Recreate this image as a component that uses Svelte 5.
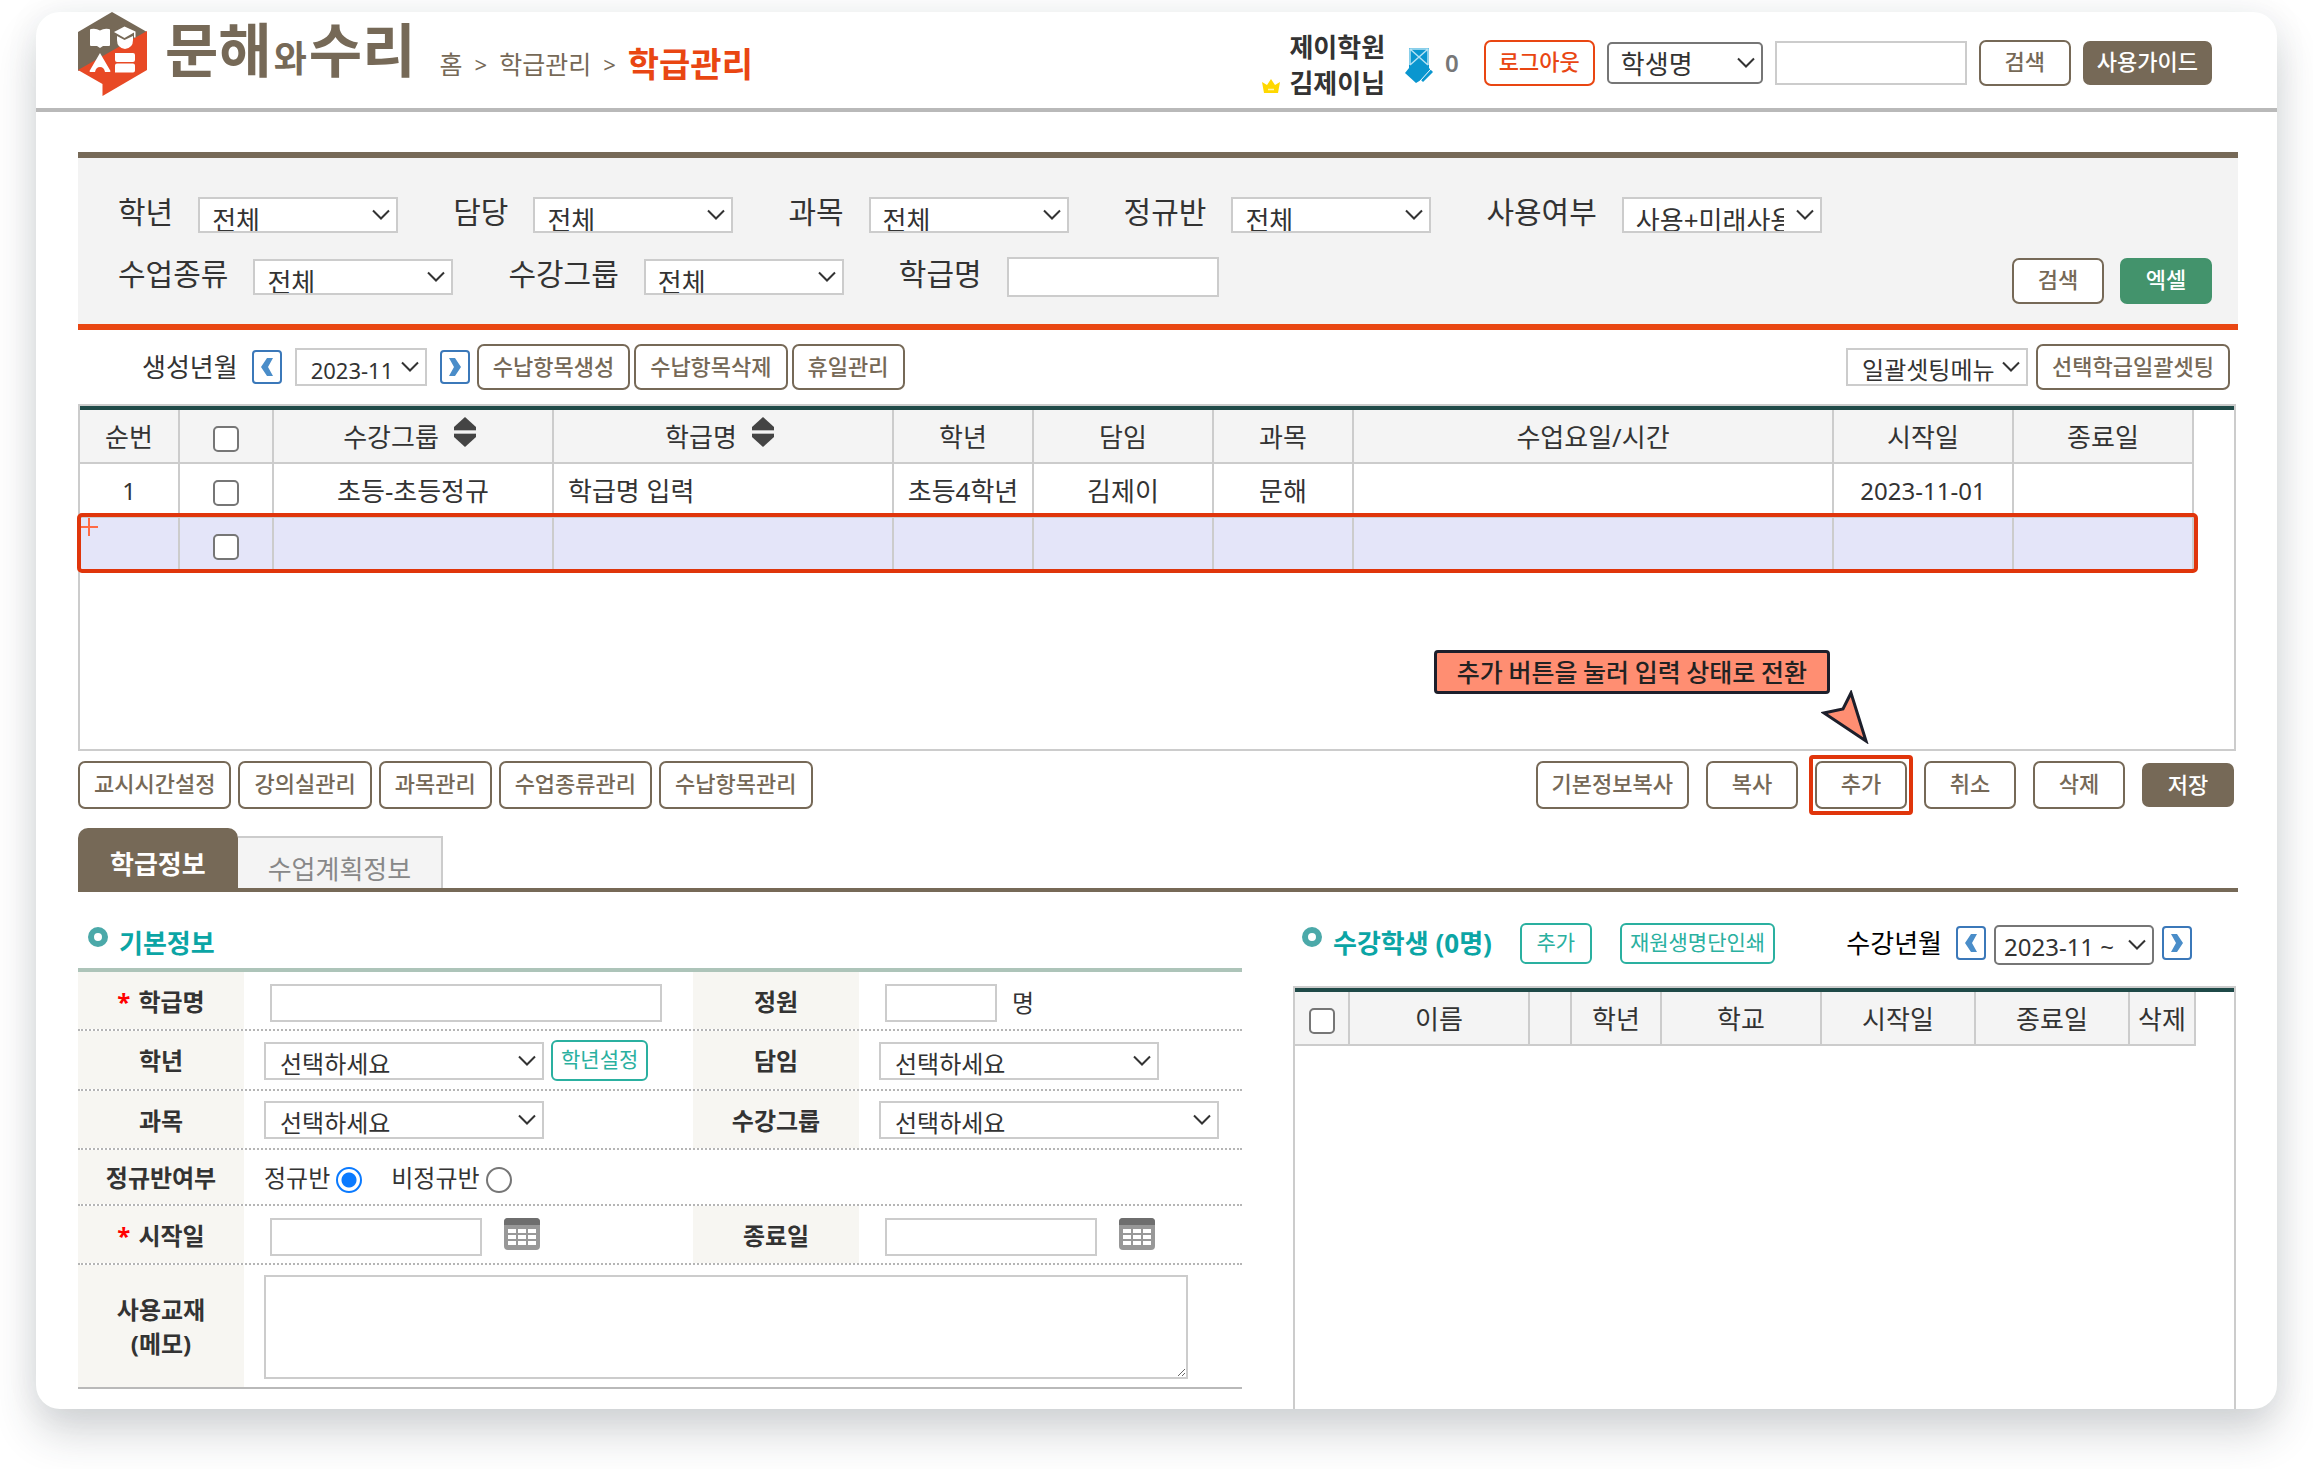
<script>
  let regular = $state('regular');

  const filterRows = [
    [
      { id: 'f-grade', label: '학년', value: '전체' },
      { id: 'f-teacher', label: '담당', value: '전체' },
      { id: 'f-subject', label: '과목', value: '전체' },
      { id: 'f-regular', label: '정규반', value: '전체' },
      { id: 'f-use', label: '사용여부', value: '사용+미래사용' }
    ],
    [
      { id: 'f-type', label: '수업종류', value: '전체' },
      { id: 'f-group', label: '수강그룹', value: '전체' }
    ]
  ];
  const settings = ['교시시간설정', '강의실관리', '과목관리', '수업종류관리', '수납항목관리'];
</script>

{#snippet picker(id, value, kind, label)}
  <span class="picker {kind}">
    <select {id} aria-label={label}><option>{value}</option></select>
    <svg viewBox="0 0 18 12" aria-hidden="true"><path d="M1 1.500 9 9.500l8-8" /></svg>
  </span>
{/snippet}

{#snippet arrow(dir, label)}
  <button class="arrow" aria-label={label}>
    <svg viewBox="0 0 26 30" aria-hidden="true">
      {#if dir === 'prev'}
        <path d="M13 6h6l-5 9 5 9h-6l-6-9z" />
      {:else}
        <path d="M13 6H7l5 9-5 9h6l6-9z" />
      {/if}
    </svg>
  </button>
{/snippet}

{#snippet sorter(label)}
  <button class="sort" aria-label={label}>
    <svg viewBox="0 0 24 30" aria-hidden="true">
      <path d="M12 0 23 10v3H1v-3z" />
      <path d="M12 30 23 20v-3H1v3z" />
      <path d="M1 13h22v1H1zM1 16h22v1H1z" fill="#bbb" />
    </svg>
  </button>
{/snippet}

{#snippet calendar(label)}
  <button class="cal" aria-label={label}>
    <svg viewBox="0 0 36 32" aria-hidden="true">
      <rect x="0" y="0" width="36" height="32" rx="4" fill="#989898" />
      <path d="M0 7V4a4 4 0 0 1 4-4h28a4 4 0 0 1 4 4v3z" fill="#6e6e6e" />
      <path
        fill="#fff"
        d="M4 11h8v4H4zM14 11h8v4h-8zM24 11h8v4h-8zM4 17h8v4H4zM14 17h8v4h-8zM24 17h8v4h-8zM4 23h8v4H4zM14 23h8v4h-8zM24 23h8v4h-8z"
      />
    </svg>
  </button>
{/snippet}

<div class="page">
  <div class="card">
    <header>
      <a class="logo" href="#home">
        <svg viewBox="0 0 69 84" aria-hidden="true">
          <path d="M34 0 69 20 0 59V20z" fill="#766957" />
          <path d="M69 19V58L24.500 84V72L0 58z" fill="#e84925" />
          <path
            d="M13 17q5-1 9 1.500Q26 16 31 17q1 0 1 1v15q0 1-1 1h-6l-3 2-3-2h-6q-1 0-1-1V18q0-1 1-1z"
            fill="#fff"
          />
          <path d="M46.500 14.500 57.500 19.500v6h-1.500v-5L46.500 26 36 20z" fill="#fff" />
          <path d="M39 24l7.500 4 8.500-4v4q0 8-8 9-8-1-8-9z" fill="#fff" />
          <path d="M22 41 32.500 59q0 1-1 1H27q-1-5-5-5t-5 5h-4.500q-1 0-1-1z" fill="#fff" />
          <path d="M37 41h18q2 0 2 2v5q0 2-2 2H39q-2 0-2-2zM39 51.500h16q2 0 2 2v5q0 2-2 2H37v-7q0-2 2-2z" fill="#fff" />
        </svg>
        <span class="word">문해<small>와</small>수리</span>
      </a>
      <nav class="crumbs" aria-label="위치">
        <a href="#home">홈</a><i>&gt;</i><a href="#class">학급관리</a><i>&gt;</i><strong>학급관리</strong>
      </nav>

      <div class="utility">
        <div class="account">
          <div>제이학원</div>
          <div class="name">
            <svg viewBox="0 0 18 14" aria-hidden="true">
              <path d="M0 3 5 6 9 0l4 6 5-3-2 11H2z" fill="#ffd800" />
              <path d="M6 10.500h6" stroke="#fff6b0" fill="none" stroke-width="1.500" />
            </svg>
            김제이님
          </div>
        </div>
        <svg class="note" viewBox="0 0 28 36" aria-hidden="true">
          <path d="M4 1h20v20l4 4-10 10-2-2-5 3L0 26l4-5z" fill="#0a96cf" />
          <path d="M5 2 23 18M23 2 5 18M5 18v-16h18v16" stroke="#b5e2f4" stroke-width="1.500" fill="none" />
          <path d="m26 22-11 12" stroke="#fff" stroke-width="1" />
        </svg>
        <span class="count">0</span>
        <button class="btn logout">로그아웃</button>
        {@render picker('h-kind', '학생명', 'dark', '검색 구분')}
        <input class="search" aria-label="검색어" />
        <button class="btn short">검색</button>
        <button class="btn solid guide">사용가이드</button>
      </div>
    </header>

    <main>
      <section class="filter">
        <div class="frow">
          {#each filterRows[0] as f}
            <label for={f.id}>{f.label}</label>
            {@render picker(f.id, f.value, 'low', f.label)}
          {/each}
        </div>
        <div class="frow">
          {#each filterRows[1] as f}
            <label for={f.id}>{f.label}</label>
            {@render picker(f.id, f.value, 'low', f.label)}
          {/each}
          <label for="f-name">학급명</label>
          <input id="f-name" />
          <div class="factions">
            <button class="btn short">검색</button>
            <button class="btn short excel">엑셀</button>
          </div>
        </div>
      </section>

      <div class="tools">
        <label for="t-month">생성년월</label>
        {@render arrow('prev', '이전 달')}
        {@render picker('t-month', '2023-11', 'month', '생성년월')}
        {@render arrow('next', '다음 달')}
        <div class="set">
          <button class="btn">수납항목생성</button>
          <button class="btn">수납항목삭제</button>
          <button class="btn">휴일관리</button>
        </div>
        <div class="set end">
          {@render picker('t-batch', '일괄셋팅메뉴', 'batch', '일괄셋팅메뉴')}
          <button class="btn">선택학급일괄셋팅</button>
        </div>
      </div>

      <section class="sheet list">
        <table>
          <colgroup>
            <col class="w-no" /><col class="w-check" /><col class="w-group" /><col class="w-name" />
            <col class="w-grade" /><col class="w-day" /><col class="w-grade" /><col />
            <col class="w-day" /><col class="w-day" />
          </colgroup>
          <thead>
            <tr>
              <th>순번</th>
              <th><input type="checkbox" aria-label="전체 선택" /></th>
              <th><span class="sorted">수강그룹{@render sorter('수강그룹 정렬')}</span></th>
              <th><span class="sorted">학급명{@render sorter('학급명 정렬')}</span></th>
              <th>학년</th>
              <th>담임</th>
              <th>과목</th>
              <th>수업요일/시간</th>
              <th>시작일</th>
              <th>종료일</th>
            </tr>
          </thead>
          <tbody>
            <tr>
              <td class="num">1</td>
              <td><input type="checkbox" aria-label="1번 선택" /></td>
              <td>초등-초등정규</td>
              <td class="left">학급명 입력</td>
              <td>초등4학년</td>
              <td>김제이</td>
              <td>문해</td>
              <td></td>
              <td class="num">2023-11-01</td>
              <td></td>
            </tr>
            <tr class="fresh">
              <td>
                <svg class="plus" viewBox="0 0 18 18" aria-hidden="true"><path d="M9 0v18M0 9h18" /></svg>
                <span class="frame"></span>
              </td>
              <td><input type="checkbox" aria-label="새 행 선택" /></td>
              <td></td><td></td><td></td><td></td><td></td><td></td><td></td><td></td>
            </tr>
          </tbody>
        </table>
      </section>

      <div class="actions">
        <div class="left-set">
          {#each settings as s}<button class="btn tall">{s}</button>{/each}
        </div>
        <div class="right-set">
          <button class="btn tall">기본정보복사</button>
          <button class="btn tall short">복사</button>
          <span class="target">
            <button class="btn tall short">추가</button>
            <span class="ring"></span>
            <span class="tip">추가 버튼을 눌러 입력 상태로 전환</span>
            <svg class="pointer" viewBox="0 0 48 54" aria-hidden="true">
              <path d="M30 3 22 19 3 23 45 51z" />
            </svg>
          </span>
          <button class="btn tall short">취소</button>
          <button class="btn tall short">삭제</button>
          <button class="btn short solid">저장</button>
        </div>
      </div>

      <div class="tabs" role="tablist">
        <button class="tab on" role="tab" aria-selected="true">학급정보</button>
        <button class="tab" role="tab" aria-selected="false">수업계획정보</button>
      </div>

      <div class="split">
        <section class="info">
          <div class="title"><span class="dot"></span><h2>기본정보</h2></div>
          <div class="form">
            <div class="row">
              <label class="key" for="c-name"><em>*</em>학급명</label>
              <div class="val inset"><input id="c-name" class="long" /></div>
              <label class="key" for="c-size">정원</label>
              <div class="val inset"><input id="c-size" class="tiny" /><span class="unit">명</span></div>
            </div>
            <div class="row tallrow">
              <label class="key" for="c-grade">학년</label>
              <div class="val">
                {@render picker('c-grade', '선택하세요', 'mid', '학년')}
                <button class="mint">학년설정</button>
              </div>
              <label class="key" for="c-teacher">담임</label>
              <div class="val">{@render picker('c-teacher', '선택하세요', 'mid', '담임')}</div>
            </div>
            <div class="row">
              <label class="key" for="c-subject">과목</label>
              <div class="val">{@render picker('c-subject', '선택하세요', 'mid', '과목')}</div>
              <label class="key" for="c-group">수강그룹</label>
              <div class="val">{@render picker('c-group', '선택하세요', 'mid wide', '수강그룹')}</div>
            </div>
            <div class="row lowrow">
              <span class="key">정규반여부</span>
              <div class="val span">
                <label class="radio">정규반<input type="radio" name="reg" value="regular" bind:group={regular} /></label>
                <label class="radio">비정규반<input type="radio" name="reg" value="other" bind:group={regular} /></label>
              </div>
            </div>
            <div class="row">
              <label class="key" for="c-start"><em>*</em>시작일</label>
              <div class="val inset"><input id="c-start" class="date" />{@render calendar('시작일 선택')}</div>
              <label class="key" for="c-end">종료일</label>
              <div class="val inset"><input id="c-end" class="date" />{@render calendar('종료일 선택')}</div>
            </div>
            <div class="row memo">
              <label class="key" for="c-memo">사용교재<br />(메모)</label>
              <div class="val span"><textarea id="c-memo"></textarea></div>
            </div>
          </div>
        </section>

        <section class="students">
          <div class="title">
            <span class="dot"></span>
            <h2>수강학생 (0명)</h2>
            <button class="mint add">추가</button>
            <button class="mint">재원생명단인쇄</button>
            <div class="term">
              <label for="s-month">수강년월</label>
              {@render arrow('prev', '이전 달')}
              {@render picker('s-month', '2023-11 ~', 'dark span-month', '수강년월')}
              {@render arrow('next', '다음 달')}
            </div>
          </div>
          <div class="sheet roster">
            <table>
              <colgroup>
                <col class="s-check" /><col /><col class="s-blank" /><col class="s-grade" />
                <col class="s-school" /><col class="s-day" /><col class="s-day" /><col class="s-del" />
              </colgroup>
              <thead>
                <tr>
                  <th><input type="checkbox" aria-label="학생 전체 선택" /></th>
                  <th>이름</th>
                  <th></th>
                  <th>학년</th>
                  <th>학교</th>
                  <th>시작일</th>
                  <th>종료일</th>
                  <th>삭제</th>
                </tr>
              </thead>
            </table>
          </div>
        </section>
      </div>
    </main>
  </div>
</div>

<style>
  :global(body) {
    background: #fff;
  }
  .page,
  .page :global(*) {
    box-sizing: border-box;
  }
  .page {
    padding: 12px 36px 60px;
    font-family: 'Noto Sans', 'Noto Sans CJK KR', sans-serif;
    font-size: 26px;
    line-height: 36px;
    color: #333;
  }
  button,
  input,
  select,
  textarea {
    font: inherit;
    color: inherit;
    margin: 0;
  }
  button {
    cursor: pointer;
    white-space: nowrap;
    flex: none;
  }
  label {
    white-space: nowrap;
  }
  .card {
    background: #fff;
    border-radius: 24px;
    box-shadow:
      0 24px 44px rgba(40, 48, 62, 0.2),
      0 0 36px rgba(40, 48, 62, 0.06);
  }

  header {
    display: flex;
    align-items: center;
    height: 100px;
    padding: 0 65px 4px 42px;
    border-bottom: 4px solid #b9b9b9;
  }
  .logo {
    display: flex;
    align-items: center;
    align-self: flex-start;
    gap: 18px;
    height: 84px;
    color: #766957;
    text-decoration: none;
  }
  .logo svg {
    width: 69px;
    height: 84px;
  }
  .word {
    font-size: 58px;
    line-height: 76px;
    font-weight: 700;
    white-space: nowrap;
  }
  .word small {
    margin: 0 2px;
    font-size: 36px;
  }
  .crumbs {
    display: flex;
    align-items: center;
    gap: 12px;
    margin-left: 24px;
    padding-top: 12px;
    font-size: 25px;
    color: #766957;
    white-space: nowrap;
  }
  .crumbs a {
    color: inherit;
    text-decoration: none;
  }
  .crumbs i {
    font-style: normal;
    font-size: 22px;
  }
  .crumbs strong {
    font-size: 34px;
    color: #e94612;
  }
  .utility {
    display: flex;
    align-items: center;
    margin-left: auto;
    padding-top: 9px;
  }
  .account {
    font-weight: 700;
    text-align: right;
    white-space: nowrap;
    padding-top: 5px;
  }
  .name svg {
    width: 18px;
    height: 14px;
    margin-right: 3px;
  }
  .note {
    width: 28px;
    height: 36px;
    margin: 4px 12px 0 20px;
  }
  .count {
    margin-right: 25px;
    font-size: 24px;
    font-weight: 600;
    color: #777;
  }
  .utility .picker {
    width: 156px;
    margin: 0 12px;
  }
  .search {
    width: 192px;
    height: 44px;
    margin-right: 12px;
  }
  .utility .guide {
    margin-left: 12px;
    padding: 0 12px 3px;
  }

  input,
  textarea {
    border: 2px solid #ccc;
    background: #fff;
    border-radius: 0;
    padding: 0 8px;
  }
  .btn {
    height: 46px;
    padding: 0 14px 3px;
    border: 2px solid #766957;
    border-radius: 7px;
    background: #fff;
    color: #766957;
    font-size: 22px;
    font-weight: 500;
    line-height: 30px;
  }
  .btn.short {
    width: 92px;
    padding: 0 0 3px;
  }
  .btn.tall {
    height: 48px;
    padding-bottom: 5px;
  }
  .btn.solid {
    height: 44px;
    background: #766957;
    color: #fff;
  }
  .btn.logout {
    padding: 0 13px 3px;
    border-color: #e94612;
    color: #e94612;
  }
  .btn.excel {
    border-color: #43936c;
    background: #43936c;
    color: #fff;
  }

  .picker {
    position: relative;
    display: block;
    flex: none;
    height: 38px;
  }
  .picker select {
    display: block;
    width: 100%;
    height: 100%;
    appearance: none;
    border: 2px solid #ccc;
    border-radius: 0;
    background: #fff;
    padding: 2px 26px 0 14px;
    font-size: 24px;
  }
  .picker svg {
    position: absolute;
    right: 8px;
    top: 50%;
    width: 18px;
    height: 12px;
    margin-top: -6px;
    pointer-events: none;
    fill: none;
    stroke: #333;
    stroke-width: 2;
  }
  .picker.low {
    width: 200px;
    height: 36px;
  }
  .picker.low select {
    padding: 3px 36px 0 12px;
    font-size: 26px;
  }
  .picker.dark {
    height: 42px;
  }
  .picker.dark select {
    border: 2px solid #767676;
    border-radius: 5px;
    padding-left: 12px;
    font-size: 26px;
  }
  .picker.month {
    width: 132px;
    margin: 0 13px;
  }
  .picker.month select {
    font-size: 22px;
  }
  .picker.batch {
    width: 182px;
  }
  .picker.mid {
    width: 280px;
  }
  .picker.wide {
    width: 340px;
  }
  .picker.dark.span-month {
    width: 160px;
    height: 40px;
    margin: 4px 8px 0;
  }
  .picker.dark.span-month select {
    font-size: 24px;
    padding-left: 8px;
  }

  .arrow {
    width: 30px;
    height: 34px;
    padding: 0;
    border: 2px solid #3b78b9;
    border-radius: 4px;
    background: #fff;
  }
  .arrow svg {
    display: block;
    width: 26px;
    height: 30px;
    fill: #4a8dc9;
  }

  main {
    padding: 40px 39px 0 42px;
  }
  .filter {
    display: grid;
    gap: 14px;
    padding: 33px 26px 23px 40px;
    border-top: 6px solid #766957;
    border-bottom: 6px solid #e94612;
    background: #f3f3f3;
  }
  .frow {
    display: flex;
    align-items: center;
    height: 48px;
  }
  .frow label {
    margin-right: 25px;
    padding-bottom: 6px;
    font-size: 30px;
  }
  .frow .picker {
    margin-right: 55px;
  }
  .frow input {
    width: 212px;
    height: 40px;
  }
  .factions {
    display: flex;
    gap: 16px;
    margin-left: auto;
    padding-top: 7px;
  }

  .tools {
    display: flex;
    align-items: center;
    height: 74px;
    padding: 0 8px 0 64px;
  }
  .tools label {
    margin-right: 14px;
  }
  .set {
    display: flex;
    align-items: center;
    gap: 4px;
    margin-left: 7px;
  }
  .set.end {
    gap: 8px;
    margin-left: auto;
  }

  .sheet {
    border: 2px solid #ccc;
    background: linear-gradient(#1f4a48, #1f4a48) top / 100% 4px no-repeat;
    padding-top: 4px;
  }
  .list {
    height: 347px;
    margin-right: 2px;
    padding-right: 40px;
  }
  table {
    width: 100%;
    table-layout: fixed;
    border-collapse: separate;
    border-spacing: 0;
  }
  th,
  td {
    height: 54px;
    padding: 2px 0 0;
    border-right: 2px solid #ccc;
    border-bottom: 2px solid #ccc;
    text-align: center;
    font-weight: 400;
    white-space: nowrap;
  }
  th {
    background: #f4f4f4;
  }
  .num {
    font-size: 24px;
  }
  td.left {
    padding-left: 14px;
    text-align: left;
  }
  .w-no { width: 100px; }
  .w-check { width: 94px; }
  .w-group { width: 280px; }
  .w-name { width: 340px; }
  .w-grade { width: 140px; }
  .w-day { width: 180px; }
  .sorted {
    display: flex;
    align-items: center;
    justify-content: center;
    gap: 14px;
    padding-right: 6px;
  }
  .sort {
    padding: 0 0 10px;
    border: 0;
    background: none;
    line-height: 0;
  }
  .sort svg {
    width: 24px;
    height: 30px;
    fill: #444;
  }
  input[type='checkbox'],
  input[type='radio'] {
    appearance: none;
    display: block;
    width: 26px;
    height: 26px;
    margin: 4px auto 0;
    padding: 0;
    border: 2px solid #767676;
    border-radius: 5px;
    background: #fff;
  }
  .fresh {
    position: relative;
  }
  .fresh td {
    background: #e4e5f9;
  }
  .plus {
    position: absolute;
    left: 0;
    top: 0;
    width: 18px;
    height: 18px;
    stroke: #ff6a45;
    stroke-width: 2;
  }
  .frame {
    position: absolute;
    inset: -5px -4px -1px -3px;
    border: 4px solid #e0350b;
    border-radius: 5px;
  }

  .actions {
    display: flex;
    justify-content: space-between;
    margin-right: 4px;
    padding-top: 10px;
  }
  .left-set {
    display: flex;
    gap: 7px;
  }
  .right-set {
    display: flex;
    align-items: center;
    gap: 17px;
  }
  .target {
    position: relative;
    display: block;
  }
  .target .btn {
    display: block;
  }
  .ring {
    position: absolute;
    inset: -6px;
    border: 4px solid #e0350b;
    border-radius: 4px;
    pointer-events: none;
  }
  .tip {
    position: absolute;
    right: 77px;
    bottom: 115px;
    height: 44px;
    padding: 0 20px;
    border: 3px solid #1d1f2b;
    border-radius: 4px;
    background: #ff8e72;
    color: #222;
    font-family: 'Noto Sans CJK KR', sans-serif;
    font-size: 25px;
    font-weight: 500;
    line-height: 37px;
    white-space: nowrap;
  }
  .pointer {
    position: absolute;
    left: 6px;
    top: -71px;
    width: 48px;
    height: 54px;
    fill: #ff8e72;
    stroke: #1d1f2b;
    stroke-width: 3;
  }

  .tabs {
    display: flex;
    align-items: flex-end;
    margin-top: 19px;
    border-bottom: 4px solid #766957;
  }
  .tab {
    height: 52px;
    padding: 12px 30px 0;
    border: 2px solid #ccc;
    border-width: 2px 2px 0 0;
    background: #f4f4f4;
    color: #888;
    line-height: 36px;
  }
  .tab.on {
    height: 60px;
    padding: 12px 32px 0;
    border: 0;
    border-radius: 10px 10px 0 0;
    background: #766957;
    color: #fff;
    font-weight: 700;
  }

  .split {
    display: grid;
    grid-template-columns: 1164fr 943fr;
    gap: 51px;
    padding-right: 2px;
  }
  .info {
    padding-bottom: 20px;
  }
  .title {
    display: flex;
    align-items: center;
    height: 76px;
    padding: 26px 0 0 10px;
  }
  .students {
    display: flex;
    flex-direction: column;
  }
  .students .title {
    height: 94px;
    padding: 8px 44px 0 9px;
  }
  .dot {
    flex: none;
    width: 20px;
    height: 20px;
    margin: 0 11px 12px 0;
    border: 6px solid #4ba9a9;
    border-radius: 50%;
  }
  h2 {
    margin: 0;
    font-size: 26px;
    line-height: 36px;
    color: #0ba5a5;
    white-space: nowrap;
  }
  .mint {
    height: 41px;
    padding: 0 8px 3px;
    border: 2px solid #2ab0a0;
    border-radius: 6px;
    background: #fff;
    color: #2ab0a0;
    font-size: 21px;
    line-height: 30px;
  }
  .mint.add {
    width: 72px;
    margin: 0 28px;
  }
  .term {
    display: flex;
    align-items: center;
    margin-left: auto;
    color: #000;
  }
  .term label {
    margin-right: 14px;
  }
  .term select {
    color: #333;
  }

  .form {
    border-top: 4px solid #adc4b9;
    border-bottom: 2px solid #b9b9b9;
    font-size: 24px;
  }
  .row {
    display: grid;
    grid-template-columns: 166px minmax(0, 449fr) 166px minmax(0, 383fr);
    min-height: 59px;
    border-bottom: 2px dotted #b5b5b5;
  }
  .tallrow {
    min-height: 60px;
  }
  .lowrow {
    min-height: 56px;
  }
  .row.memo {
    min-height: 122px;
    border-bottom: 0;
  }
  .key {
    display: flex;
    align-items: center;
    justify-content: center;
    padding-top: 2px;
    background: #f7f6f2;
    font-weight: 700;
    line-height: 34px;
    text-align: center;
  }
  .key em {
    margin-right: 8px;
    font-style: normal;
    color: #f00;
  }
  .val {
    display: flex;
    align-items: center;
    gap: 7px;
    padding: 1px 0 0 20px;
  }
  .val.inset {
    gap: 15px;
    padding: 4px 0 0 26px;
  }
  .val.span {
    grid-column: 2 / -1;
  }
  .val input {
    height: 38px;
  }
  .long { width: 392px; }
  .tiny { width: 112px; }
  .date { width: 212px; }
  .cal {
    padding: 0;
    margin-left: 7px;
    margin-bottom: 5px;
    border: 0;
    background: none;
    line-height: 0;
  }
  .cal svg {
    width: 36px;
    height: 32px;
  }
  .radio {
    display: flex;
    align-items: center;
    gap: 6px;
    margin-right: 22px;
  }
  .val input[type='radio'] {
    height: 26px;
    border-radius: 50%;
  }
  input[type='radio']:checked {
    border-color: #0a7aff;
    background: radial-gradient(circle, #0a7aff 0 7px, #fff 8px);
  }
  textarea {
    width: calc(100% - 54px);
    height: 104px;
  }

  .roster {
    flex: 1;
    border-bottom: 0;
    padding-right: 38px;
  }
  .s-check { width: 55px; }
  .s-blank { width: 42px; }
  .s-grade { width: 90px; }
  .s-school { width: 160px; }
  .s-day { width: 154px; }
  .s-del { width: 66px; }
</style>
